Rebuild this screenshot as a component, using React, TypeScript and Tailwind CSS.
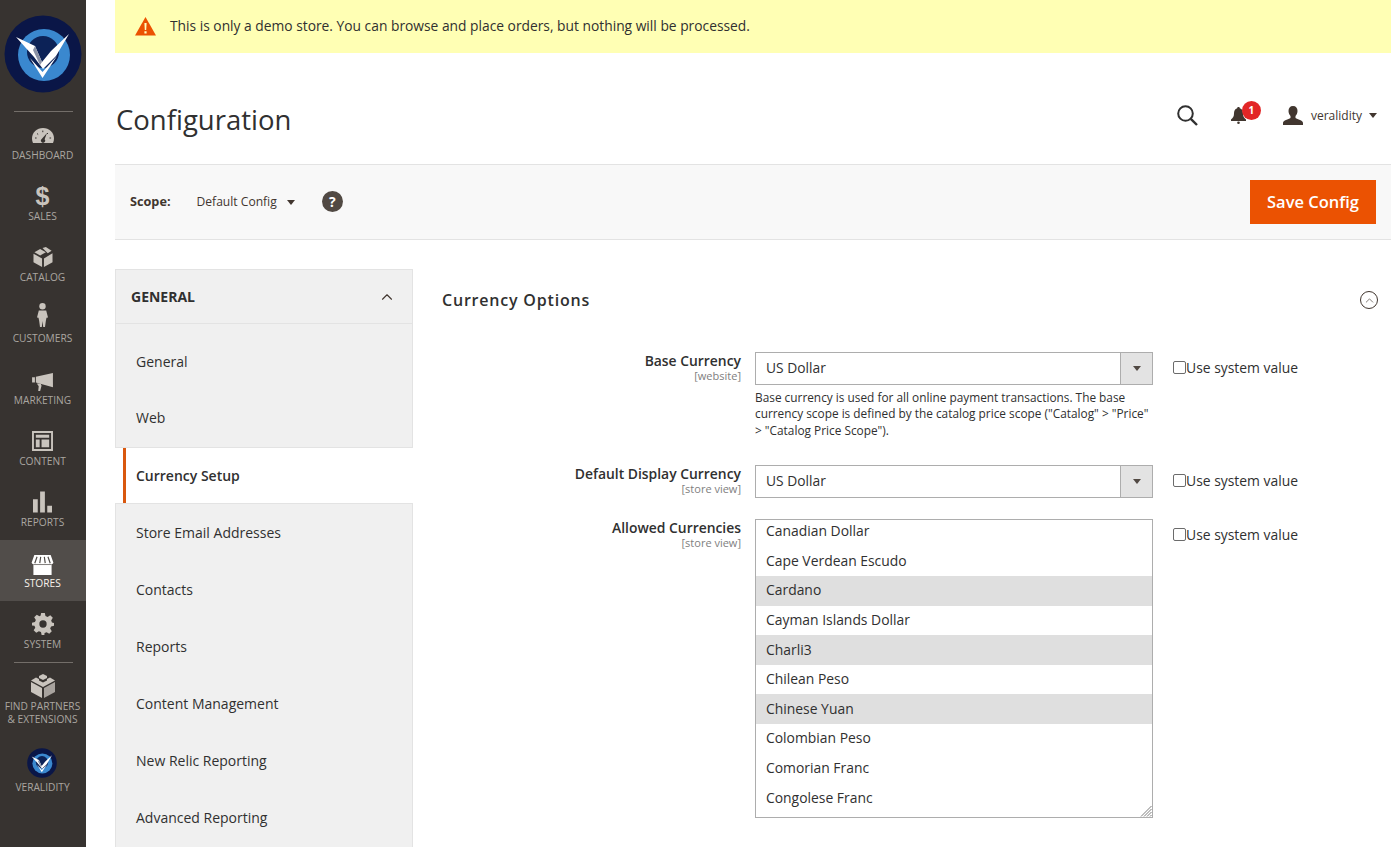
import { ChevronUp } from "lucide-react"

const iconColor = "#c9c4bd"

function Logo({ size }: { size: number }) {
    return (
        <svg width={size} height={size} viewBox="0 0 78 78">
            <circle cx="39" cy="39" r="38.500" fill="#0a1647" />
            <circle cx="40" cy="40" r="26" fill="#3a88cf" />
            <circle cx="39" cy="37" r="16" fill="#0c2257" />
            <path d="M12 22 L31 31 L38 47 L47 36 L65 19 L52 41 L39 54 L30 42 Z" fill="#ffffff" />
            <path d="M31 31 L38 47 L36 50 L29 35 Z" fill="#8a92a6" />
            <path d="M26 43 L38.500 63 L53 41 L38.500 57 Z" fill="#ffffff" />
        </svg>
    )
}

function GaugeIcon() {
    return (
        <svg width="22" height="15" viewBox="0 0 22 15">
            <path d="M11 0C4.900 0 0 4.600 0 10.500c0 1.600.3 3.100 1 4.500h20c.7-1.400 1-2.900 1-4.500C22 4.600 17.100 0 11 0z" fill={iconColor} />
            <path d="M15 5 L12.600 11.200 A2.100 2.100 0 1 1 9.700 11 Z" fill="#373330" />
            <path d="M3 10h1.600M5 5.500l1.200 1M10.800 2.600v1.600M16 5l-1 1M17.500 10h1.600" stroke="#373330" strokeWidth="1" />
        </svg>
    )
}

function BoxIcon() {
    return (
        <svg width="20" height="20" viewBox="0 0 20 21">
            <path d="M1 5.500 L7 2 L13 5.500 L7 9 Z" fill={iconColor} />
            <path d="M9.500 1 L13 0 L19 4 L15 6.500 Z" fill={iconColor} />
            <path d="M0 7 L9 12 L9 21 L0 16 Z" fill={iconColor} />
            <path d="M11 12 L20 6.500 L20 16 L11 21 Z" fill={iconColor} />
        </svg>
    )
}

function PersonIcon() {
    return (
        <svg className="-translate-y-[3px]" width="11" height="24" viewBox="0 0 11 24">
            <circle cx="5.500" cy="3.200" r="3.200" fill={iconColor} />
            <path d="M1.800 7.500h7.400L11 14.500l-1.500.3-.6 2.700L8 24H6.200L5.500 18 4.800 24H3l-.9-6.500-.6-2.700L0 14.500z" fill={iconColor} />
        </svg>
    )
}

function MegaphoneIcon() {
    return (
        <svg className="translate-y-[2px]" width="21" height="18" viewBox="0 0 22 19">
            <path d="M0 4.500h3V10H0z" fill={iconColor} />
            <path d="M4 4 L22 0 V15 L4 10 Z" fill={iconColor} />
            <path d="M5 11h4L10 13.500 8.500 19H6.500L7 14z" fill={iconColor} />
        </svg>
    )
}

function ContentIcon() {
    return (
        <svg width="21" height="20" viewBox="0 0 22 21">
            <path fillRule="evenodd" d="M0 0h22v21H0z M2 2v17h18V2z" fill={iconColor} />
            <path d="M4 4h14v3H4zM4 9h4v8H4zM10 9h8v8h-8z" fill={iconColor} />
        </svg>
    )
}

function BarsIcon() {
    return (
        <svg width="19" height="22" viewBox="0 0 20 22">
            <path d="M0 8h5v14H0zM7.500 0h5v22h-5zM15 15h5v7h-5z" fill={iconColor} />
        </svg>
    )
}

function StoreIcon() {
    return (
        <svg className="translate-y-[2px]" width="23" height="20" viewBox="0 0 24 22">
            <path d="M3 0h18l3 8.500a3 3 0 0 1-2 1.800V22H2V10.300A3 3 0 0 1 0 8.500z" fill="#ffffff" />
            <path d="M6 2 L3.500 9M10 2 L9 9M14 2 L15 9M18 2 L20.500 9" stroke="#514d4a" strokeWidth="1.300" />
            <path d="M2 10.500h20" stroke="#514d4a" strokeWidth="0.800" />
        </svg>
    )
}

function GearIcon() {
    return (
        <svg width="22" height="22" viewBox="0 0 24 24">
            <path
                fillRule="evenodd"
                d="M10 0h4l.7 3.300 2.300 1 2.900-1.800 2.800 2.800L20.900 8.200l.9 2.200L24 11v3l-3.200.7-1 2.300 1.800 2.900-2.800 2.800-2.900-1.800-2.200.9L13.500 24h-3l-.7-3.200-2.300-1-2.900 1.800-2.800-2.800L3.600 16l-.9-2.200L0 13.500V10.500l3.200-.7 1-2.300-1.800-2.900 2.800-2.800 2.900 1.800 1.200-.5zM12 8a4 4 0 1 0 0 8 4 4 0 0 0 0-8z"
                fill={iconColor}
            />
        </svg>
    )
}

function BrickIcon() {
    return (
        <svg width="24" height="24" viewBox="0 0 24 24">
            <path d="M12 0l4 2v2l-4 2-4-2V2z" fill={iconColor} />
            <path d="M5 3.500l3 1.500v1.500l4 2 4-2V5l3-1.500 5 3L12 13 0 6.500z" fill={iconColor} />
            <path d="M0 8l11 6v10L0 18z" fill={iconColor} />
            <path d="M13 14l11-6v10l-11 6z" fill="#a8a39e" />
        </svg>
    )
}

function SearchIcon() {
    return (
        <svg width="21" height="21" viewBox="0 0 21 21" fill="none" stroke="#303030" strokeWidth="2">
            <circle cx="8.500" cy="8.500" r="7.300" />
            <path d="M13.800 13.800 L20 20" strokeWidth="2.400" />
        </svg>
    )
}

function BellIcon() {
    return (
        <svg width="15" height="17" viewBox="0 0 15 17">
            <path d="M7.500 0c-.8 0-1.300.5-1.300 1.200C3.800 2 3 4 3 6.500 3 9.500 2 11 0 12.500V14h15v-1.500c-2-1.500-3-3-3-6 0-2.500-.8-4.500-3.200-5.300C8.800.5 8.300 0 7.500 0z" fill="#41362f" />
            <circle cx="7.500" cy="15.700" r="1.300" fill="#41362f" />
        </svg>
    )
}

function UserIcon() {
    return (
        <svg width="20" height="19" viewBox="0 0 20 19">
            <path d="M10 0c3 0 4.500 2 4.500 5 0 2-1 4-2 5v2c2 1.500 7.500 2 7.500 5v2H0v-2c0-3 5.500-3.500 7.500-5v-2c-1-1-2-3-2-5 0-3 1.500-5 4.500-5z" fill="#41362f" />
        </svg>
    )
}

function WarningIcon() {
    return (
        <svg width="21" height="19" viewBox="0 0 21 19">
            <path d="M10.500 0 L21 18.500 H0 Z" fill="#eb5202" />
            <path d="M9.400 6h2.200l-.4 7H9.800zM9.400 14.300h2.200v2.100H9.400z" fill="#ffffc0" />
        </svg>
    )
}

function Caret({ className }: { className: string }) {
    return <span className={`block h-0 w-0 border-x-[4px] border-t-[5px] border-x-transparent ${className}`} />
}

const menu = [
    { label: "DASHBOARD", icon: <GaugeIcon /> },
    { label: "SALES", icon: <span className="font-['Liberation_Sans',sans-serif] text-[25px] leading-[25px] font-bold text-[#c9c4bd]">$</span> },
    { label: "CATALOG", icon: <BoxIcon /> },
    { label: "CUSTOMERS", icon: <PersonIcon /> },
    { label: "MARKETING", icon: <MegaphoneIcon /> },
    { label: "CONTENT", icon: <ContentIcon /> },
    { label: "REPORTS", icon: <BarsIcon /> },
    { label: "STORES", icon: <StoreIcon />, active: true },
    { label: "SYSTEM", icon: <GearIcon /> },
]

const sections = [
    "General",
    "Web",
    "Currency Setup",
    "Store Email Addresses",
    "Contacts",
    "Reports",
    "Content Management",
    "New Relic Reporting",
    "Advanced Reporting",
]

const currencies = [
    { name: "Canadian Dollar" },
    { name: "Cape Verdean Escudo" },
    { name: "Cardano", selected: true },
    { name: "Cayman Islands Dollar" },
    { name: "Charli3", selected: true },
    { name: "Chilean Peso" },
    { name: "Chinese Yuan", selected: true },
    { name: "Colombian Peso" },
    { name: "Comorian Franc" },
    { name: "Congolese Franc" },
]

function Sidebar() {
    return (
        <aside className="flex h-[847px] w-[86px] shrink-0 flex-col items-center bg-[#373330]">
            <div className="flex h-[112px] w-full shrink-0 flex-col items-center">
                <div className="mt-[15px]">
                    <Logo size={78} />
                </div>
                <div className="mt-auto h-px w-[59px] bg-[#736e69]" />
            </div>
            {menu.map((item) => (
                <div
                    key={item.label}
                    className={`flex h-[61.14px] w-full shrink-0 flex-col items-center pt-[10px] pr-px ${item.active ? "bg-[#514d4a] text-[#f7f3eb]" : "text-[#aaa6a0]"}`}
                >
                    <div className="flex h-[26px] items-center justify-center">{item.icon}</div>
                    <span className="text-[10.200px] leading-[14px]">{item.label}</span>
                </div>
            ))}
            <div className="h-px w-[59px] shrink-0 bg-[#736e69]" />
            <div className="mt-[11px] flex flex-col items-center pr-px text-[#aaa6a0]">
                <BrickIcon />
                <span className="mt-[2px] text-center text-[10.200px] leading-[13px] whitespace-nowrap">
                    FIND PARTNERS
                    <br />& EXTENSIONS
                </span>
            </div>
            <div className="mt-[22px] flex flex-col items-center pr-px text-[#aaa6a0]">
                <Logo size={30} />
                <span className="mt-[2px] text-[10.200px] leading-[14px]">VERALIDITY</span>
            </div>
        </aside>
    )
}

function SelectBox() {
    return (
        <div className="flex h-[33px] w-[398px] border border-[#adadad] bg-white">
            <span className="flex-1 pl-[10px] text-[13.800px] leading-[30px] text-[#303030]">US Dollar</span>
            <span className="flex w-[32px] items-center justify-center border-l border-[#adadad] bg-[#e3e3e3]">
                <Caret className="border-t-[#514943]" />
            </span>
        </div>
    )
}

function SystemValue({ top }: { top: string }) {
    return (
        <label className={`ml-[20px] flex items-center text-[13.900px] leading-[19px] text-[#303030] ${top}`}>
            <span className="h-[13px] w-[13px] rounded-[2px] border border-[#6b6b6b] bg-white" />
            Use system value
        </label>
    )
}

function FieldLabel({ title, scope }: { title: string; scope: string }) {
    return (
        <div className="w-[326px] shrink-0 pr-[14px] text-right">
            <div className="text-[13.900px] leading-[18px] font-semibold text-[#303030]">{title}</div>
            <div className="text-[11px] leading-[12px] text-[#808080]">{scope}</div>
        </div>
    )
}

export default function App() {
    return (
        <div className="flex h-[847px] w-[1400px] overflow-hidden bg-white font-['Open_Sans',sans-serif]">
            <Sidebar />
            <main className="ml-[29px] w-[1276px] shrink-0">
                <div className="flex h-[53px] items-center bg-[#ffffb4] pl-[20px] text-[13.800px] text-[#303030]">
                    <WarningIcon />
                    <span className="ml-[14px]">This is only a demo store. You can browse and place orders, but nothing will be processed.</span>
                </div>

                <header className="flex h-[111px] items-center pt-[22px] pr-[14px]">
                    <h1 className="ml-px text-[27.500px] leading-[40px] font-normal text-[#303030]">Configuration</h1>
                    <div className="mb-[8px] ml-auto flex items-center">
                        <SearchIcon />
                        <div className="relative ml-[33px] h-[17px] w-[33px]">
                            <BellIcon />
                            <span className="absolute top-[-6px] left-[11px] flex h-[19px] w-[19px] items-center justify-center rounded-full bg-[#e22626] text-[10px] font-bold text-white">
                                1
                            </span>
                        </div>
                        <div className="ml-[19px]">
                            <UserIcon />
                        </div>
                        <span className="ml-[8px] text-[12px] text-[#41362f]">veralidity</span>
                        <Caret className="ml-[7px] border-t-[#41362f]" />
                    </div>
                </header>

                <div className="flex h-[76px] items-center border-y border-[#e3e3e3] bg-[#f8f8f8] pr-[15px] pl-[15px] text-[#41362f]">
                    <span className="text-[12.700px] font-bold">Scope:</span>
                    <span className="ml-[26px] text-[12.100px]">Default Config</span>
                    <Caret className="ml-[10px] border-t-[#41362f]" />
                    <span className="-mt-[2px] ml-[27px] flex h-[21px] w-[21px] items-center justify-center rounded-full bg-[#514943] text-[14px] font-bold text-white">?</span>
                    <button className="ml-auto h-[44px] w-[126px] border border-[#eb5202] bg-[#eb5202] text-[16.500px] font-semibold text-white">Save Config</button>
                </div>

                <div className="mt-[29px] flex">
                    <nav className="h-[600px] w-[298px] shrink-0 border-x border-t border-[#e3e3e3] bg-[#f0f0f0]">
                        <div className="flex h-[54px] items-center justify-between border-b border-[#e3e3e3] pr-[16px] pl-[15px]">
                            <span className="text-[14px] font-bold text-[#303030]">GENERAL</span>
                            <ChevronUp size={18} strokeWidth={1.500} color="#41362f" />
                        </div>
                        <div className="pt-[9px]">
                            {sections.map((name) =>
                                name === "Currency Setup" ? (
                                    <div key={name} className="-mx-px h-[57px] border-y border-[#e3e3e3] bg-white pl-[8px]">
                                        <div className="flex h-full items-center border-l-[3px] border-[#d9580f] pb-px pl-[10px] text-[14px] font-semibold text-[#303030]">{name}</div>
                                    </div>
                                ) : (
                                    <div key={name} className={`flex h-[57px] items-center pl-[20px] text-[14px] text-[#303030] ${name === "Web" ? "pb-[2px]" : ""}`}>
                                        {name}
                                    </div>
                                ),
                            )}
                        </div>
                    </nav>

                    <section className="ml-[29px] flex-1">
                        <div className="flex h-[62px] items-center justify-between pr-[13px]">
                            <h2 className="text-[16px] leading-[22px] font-semibold tracking-[0.8px] text-[#303030]">Currency Options</h2>
                            <span className="flex h-[18px] w-[18px] items-center justify-center rounded-full border border-[#41362f]">
                                <ChevronUp size={13} strokeWidth={1.200} color="#41362f" />
                            </span>
                        </div>

                        <div className="mt-[21px] -ml-[13px] flex">
                            <FieldLabel title="Base Currency" scope="[website]" />
                            <div className="w-[398px]">
                                <SelectBox />
                                <p className="mt-[4px] text-[11.850px] leading-[16.300px] text-[#303030]">
                                    Base currency is used for all online payment transactions. The base currency scope is defined by the catalog price scope ("Catalog" &gt; "Price" &gt; "Catalog Price Scope").
                                </p>
                            </div>
                            <SystemValue top="h-[31px]" />
                        </div>

                        <div className="mt-[27px] -ml-[13px] flex">
                            <FieldLabel title="Default Display Currency" scope="[store view]" />
                            <SelectBox />
                            <SystemValue top="h-[32px]" />
                        </div>

                        <div className="mt-[21px] -ml-[13px] flex">
                            <FieldLabel title="Allowed Currencies" scope="[store view]" />
                            <div className="relative h-[299px] w-[398px] overflow-hidden border border-[#adadad] bg-white">
                                <div className="-mt-[3px]">
                                    {currencies.map((c) => (
                                        <div
                                            key={c.name}
                                            className={`flex h-[29.600px] items-center pl-[10px] text-[13.900px] text-[#303030] ${c.selected ? "bg-[#dfdfdf]" : ""}`}
                                        >
                                            {c.name}
                                        </div>
                                    ))}
                                </div>
                                <svg className="absolute right-0 bottom-0" width="12" height="12" viewBox="0 0 12 12" stroke="#7d7d7d" strokeWidth="1">
                                    <path d="M11.500 1 L1 11.500 M11.500 4 L4 11.500 M11.500 7 L7 11.500 M11.500 10 L10 11.500" />
                                </svg>
                            </div>
                            <SystemValue top="h-[32px]" />
                        </div>
                    </section>
                </div>
            </main>
        </div>
    )
}
